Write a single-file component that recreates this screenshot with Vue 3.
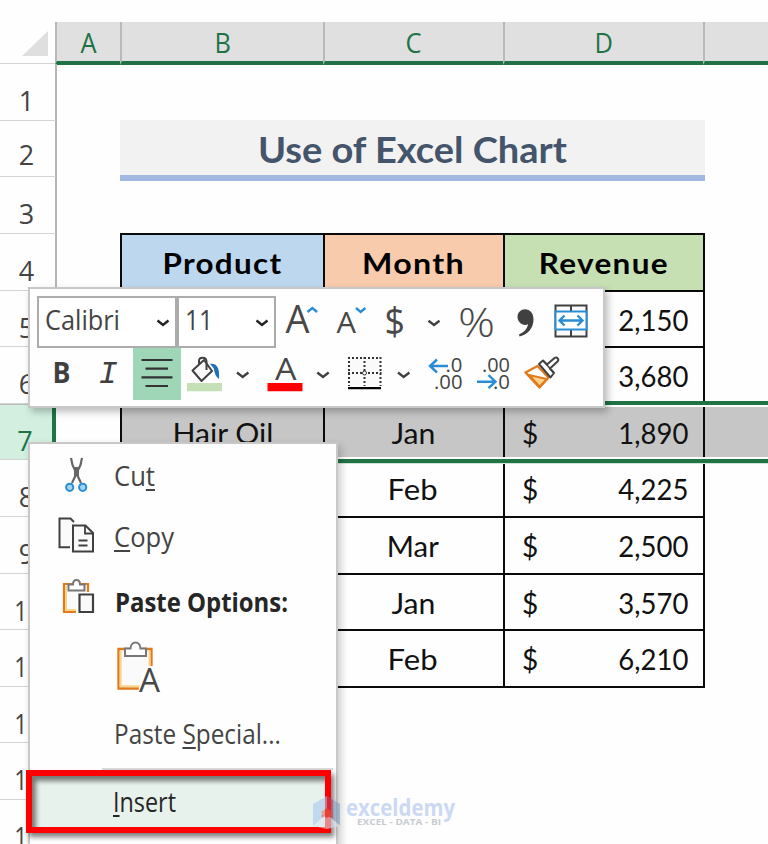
<script setup>
// Squeezes or stretches a label horizontally to the given width.
const vFit = {
  mounted(el, { value }) {
    const natural = el.getBoundingClientRect().width
    if (natural) el.style.transform = `scaleX(${value / natural})`
  }
}

const rows = [
  { n: 1 },
  { n: 2, title: true },
  { n: 3 },
  { n: 4, head: true },
  { n: 5, data: true, amount: '2,150' },
  { n: 6, data: true, amount: '3,680' },
  { n: 7, data: true, selected: true, product: 'Hair Oil', month: 'Jan', mw: 44, amount: '1,890' },
  { n: 8, data: true, month: 'Feb', mw: 50, amount: '4,225' },
  { n: 9, data: true, month: 'Mar', mw: 52, amount: '2,500' },
  { n: 10, data: true, month: 'Jan', mw: 44, amount: '3,570' },
  { n: 11, data: true, last: true, month: 'Feb', mw: 50, amount: '6,210' },
  { n: 12 },
  { n: 13 },
  { n: 14 }
]
</script>

<template>
  <div class="window">
    <div class="colheads">
      <div class="corner"><svg width="55" height="43" viewBox="0 0 55 43"><path d="M22 34L48 9V34Z" fill="#dfdfdf" /></svg></div>
      <div class="colhead a"><span class="cond">A</span></div>
      <div class="colhead b"><span class="cond">B</span></div>
      <div class="colhead c"><span class="cond">C</span></div>
      <div class="colhead d"><span class="cond">D</span></div>
      <div class="colhead e"></div>
    </div>

    <div v-for="r in rows" :key="r.n" class="row" :class="{ selected: r.selected, last: r.last }">
      <div class="rowhead" :class="{ raised: r.title }"><span :class="{ two: r.n > 9 }">{{ r.n }}</span></div>
      <div class="cell-a"></div>
      <div v-if="r.title" class="title"><span v-fit="309">Use of Excel Chart</span></div>
      <template v-if="r.head">
        <div class="cell b head blue"><span v-fit="120">Product</span></div>
        <div class="cell c head peach"><span v-fit="103">Month</span></div>
        <div class="cell d head green"><span v-fit="130">Revenue</span></div>
      </template>
      <template v-if="r.data">
        <div class="cell b"><span v-if="r.product" v-fit="101">{{ r.product }}</span></div>
        <div class="cell c"><span v-if="r.month" v-fit="r.mw">{{ r.month }}</span></div>
        <div class="cell d money"><span>$</span><span v-fit="70" class="right">{{ r.amount }}</span></div>
        <div class="cell-e"></div>
      </template>
    </div>

    <div class="toolbar">
      <div class="tools">
        <div class="box font"><span v-fit="75" class="left">Calibri</span><svg class="chev" width="14" height="8" viewBox="0 0 14 8"><path d="M1.5 1.5L7 6L12.5 1.5" /></svg></div>
        <div class="box size"><span v-fit="28" class="left">11</span><svg class="chev" width="14" height="8" viewBox="0 0 14 8"><path d="M1.5 1.5L7 6L12.5 1.5" /></svg></div>
        <svg width="51" height="52" viewBox="0 0 51 52"><text class="lt" x="9.5" y="37" font-size="39" textLength="24" lengthAdjust="spacingAndGlyphs">A</text><path class="bl" d="M31.5 16L36.3 12L41.1 16" /></svg>
        <svg width="48" height="52" viewBox="0 0 48 52"><text class="lt" x="9.5" y="37" font-size="29" textLength="19.5" lengthAdjust="spacingAndGlyphs">A</text><path class="bl" d="M29 12L33.7 16L38.4 12" /></svg>
        <svg width="40" height="52" viewBox="0 0 40 52"><text class="lt" x="9.5" y="38.5" font-size="38" textLength="20.5" lengthAdjust="spacingAndGlyphs">$</text></svg>
        <svg width="35" height="52" viewBox="0 0 35 52"><path class="dk" d="M13.500 24.700L19 29L24.500 24.700" /></svg>
        <svg width="55" height="52" viewBox="0 0 55 52"><text class="lt thin" x="8" y="40.500" font-size="41" textLength="37" lengthAdjust="spacingAndGlyphs">%</text></svg>
        <svg width="40" height="52" viewBox="0 0 40 52"><path d="M20 13.300C24.800 13.300 28.500 17 28.500 23.500C28.500 32 23 38.500 14.500 40.500L14 38.500C19 36.500 22.500 32.500 23 28.300C18 30.500 12.500 26.500 12.500 20.800C12.500 16.500 16 13.300 20 13.300Z" fill="#404040" /></svg>
        <svg width="56" height="52" viewBox="0 0 56 52">
          <path d="M10.500 9.500H41.500V40.500H10.500ZM26 9.500V40.500" fill="#fafafa" stroke="#404040" stroke-width="2" />
          <path d="M10.500 15.500H41.500V33.500H10.500Z" fill="#fff" stroke="#2a8dd4" stroke-width="2" />
          <path class="bl" d="M15 24.500H37M19.500 19.500L14.500 24.500L19.500 29.500M32.500 19.500L37.500 24.500L32.500 29.500" />
        </svg>
      </div>
      <div class="tools">
        <svg width="48" height="52" viewBox="0 0 48 52"><text x="15.500" y="34.700" font-size="29" class="bold" textLength="18" lengthAdjust="spacingAndGlyphs">B</text></svg>
        <svg width="48" height="52" viewBox="0 0 48 52"><text x="13.500" y="34.500" font-size="32" class="ital">I</text></svg>
        <svg width="48" height="52" viewBox="0 0 48 52" class="active"><path d="M8.500 12H39.500M12.500 20.700H35M8.500 29.300H39.500M12.500 38H35" stroke="#333" stroke-width="2.200" /></svg>
        <svg width="48" height="52" viewBox="0 0 48 52">
          <path d="M11.500 22.500L23 12L31 23L20.500 33Z" fill="#fafafa" stroke="#404040" stroke-width="2" stroke-linejoin="round" />
          <path d="M18 17V13C18 8.500 25 8.500 25.500 13V22" fill="none" stroke="#404040" stroke-width="2" />
          <path d="M29 16C35 15 39 19 38 31C34 28 34 25 32.500 20Z" fill="#1f70b8" />
          <path d="M6 35H41V43.300H6Z" fill="#c5e0b4" />
        </svg>
        <svg width="32" height="52" viewBox="0 0 32 52"><path class="dk" d="M8 24.500L13.700 29L19.400 24.500" /></svg>
        <svg width="48" height="52" viewBox="0 0 48 52"><text class="lt" x="14" y="32" font-size="31" textLength="21.500" lengthAdjust="spacingAndGlyphs">A</text><path d="M6.500 35H41.500V43.300H6.500Z" fill="#f00" /></svg>
        <svg width="32" height="52" viewBox="0 0 32 52"><path class="dk" d="M8.300 24.500L14 29L19.700 24.500" /></svg>
        <svg width="48" height="52" viewBox="0 0 48 52">
          <path d="M7 10H40V38H7Z" fill="#fafafa" />
          <path d="M7 10H40.500M7 25H40.500M8 9V38M23.500 9V38M39.500 9V38" fill="none" stroke="#333" stroke-width="2" stroke-dasharray="2 2" />
          <path d="M7 40.200H40" stroke="#000" stroke-width="2.200" />
          <circle cx="23.500" cy="25" r="2" fill="#fff" stroke="#333" />
        </svg>
        <svg width="32" height="52" viewBox="0 0 32 52"><path class="dk" d="M9 24.500L14.700 29L20.400 24.500" /></svg>
        <svg width="48" height="52" viewBox="0 0 48 52">
          <text class="num" x="24.500" y="23.700" textLength="17" lengthAdjust="spacingAndGlyphs">.0</text>
          <text class="num" x="13" y="41" textLength="28.500" lengthAdjust="spacingAndGlyphs">.00</text>
          <path class="bl" d="M27 18H9.500M16 11.500L9 18L16 24.500" />
        </svg>
        <svg width="48" height="52" viewBox="0 0 48 52">
          <text class="num" x="13" y="23.700" textLength="28" lengthAdjust="spacingAndGlyphs">.00</text>
          <text class="num" x="24" y="41" textLength="17" lengthAdjust="spacingAndGlyphs">.0</text>
          <path class="bl" d="M8 33.700H26M19.500 27.200L26.500 33.700L19.500 40.200" />
        </svg>
        <svg width="48" height="52" viewBox="0 0 48 52">
          <path d="M8.500 24.500L20.500 18L31.500 29.500L22.500 39.500Z" fill="#fff" stroke="#e07a1c" stroke-width="2.400" stroke-linejoin="round" />
          <path d="M12 27L30 31L22.500 38.500Z" fill="#fbd48a" stroke="#e07a1c" stroke-width="2" />
          <path d="M22 16L26 12.500L30 16.500L37.500 10C40 8.500 42.500 11.500 40.500 13.500L33 20.500L37 25L33.500 29.500Z" fill="#fff" stroke="#404040" stroke-width="2" stroke-linejoin="round" />
          <path d="M26 12.500L37 25" stroke="#404040" stroke-width="1.500" />
        </svg>
      </div>
    </div>

    <div class="menu">
      <div class="item cut">
        <svg width="83" height="62" viewBox="0 0 83 62">
          <path d="M40 13L41.500 20L50 38M51 13L49.500 20L41 38" fill="none" stroke="#666" stroke-width="2.200" />
          <path d="M43 22H48V31H43Z" fill="#666" />
          <circle cx="38.700" cy="42.300" r="3.600" class="ring" /><circle cx="51.700" cy="42.300" r="3.600" class="ring" />
        </svg>
        <span v-fit="41" class="left">Cu<u>t</u></span>
      </div>
      <div class="item copy">
        <svg width="83" height="62" viewBox="0 0 83 62">
          <path d="M39 40.200H28.500V11.500H39.500L43 15" fill="#fafafa" stroke="#404040" stroke-width="2" />
          <path d="M42 18.500H54.500L62 26V44.500H42Z" fill="#fafafa" stroke="#404040" stroke-width="2" />
          <path d="M54 18.500V26.500H62M47.500 33.500H56.500M47.500 38.500H56.500" fill="none" stroke="#404040" stroke-width="1.800" />
        </svg>
        <span v-fit="60" class="left"><u>C</u>opy</span>
      </div>
      <div class="item options">
        <svg width="83" height="68" viewBox="0 0 83 68">
          <path d="M33 15H57V43H33Z" fill="#fafafa" stroke="#e07a1c" stroke-width="2.200" />
          <path d="M35 17V41H46" fill="none" stroke="#fbd48a" stroke-width="2" />
          <path d="M45 23H66V46H45Z" fill="#fff" />
          <path d="M37.500 21.500V15.500H42C42 9.500 49 9.500 49 15.500H53.500V21.500Z" fill="#fff" stroke="#777" stroke-width="2" />
          <path d="M48.500 25.500H62V43H48.500Z" fill="#fafafa" stroke="#404040" stroke-width="2.200" />
        </svg>
        <span v-fit="173" class="left">Paste Options:</span>
      </div>
      <div class="item big">
        <svg width="60" height="60" viewBox="0 0 60 60">
          <path d="M3.500 12H36.500V51.500H3.500Z" fill="#fafafa" stroke="#e07a1c" stroke-width="2.300" />
          <path d="M5.700 14V49.300H29M34.500 14V30" fill="none" stroke="#fbd48a" stroke-width="2" />
          <path d="M23 55L27 38L32 29H42V55Z" fill="#fff" />
          <path d="M10 19V11.500H15.500C16 3.500 25 3.500 25.500 11.500H31V19Z" fill="#fff" stroke="#777" stroke-width="2" />
          <text class="lt" x="24" y="54.500" font-size="33" textLength="21" lengthAdjust="spacingAndGlyphs">A</text>
        </svg>
      </div>
      <div class="item special"><span v-fit="167" class="left">Paste <u>S</u>pecial...</span></div>
      <div class="rule"></div>
      <div class="insert"><span v-fit="63" class="left"><u>I</u>nsert</span></div>
    </div>

    <div class="watermark">
      <svg width="28" height="34" viewBox="0 0 28 34">
        <path d="M0 8L14 0L14 18L0 30Z" fill="#a9c8ee" />
        <path d="M14 0L27 8V30L14 18Z" fill="#7f9fc4" />
        <path d="M14 0L20 4V22L14 26L8 20L14 12Z" fill="#d52238" opacity=".75" />
        <path d="M0 30L14 18L27 30L14 33Z" fill="#dbe8ef" />
        <path d="M8 16L14 12L18 15V20L13 22Z" fill="#dd6c58" />
      </svg>
      <div class="brand">
        <span v-fit="109" class="name left">exceldemy</span>
        <span v-fit="84" class="tag left">EXCEL - DATA - BI</span>
      </div>
    </div>
  </div>
</template>

<style>
body { background: #fefefe; overflow: hidden; }
</style>

<style scoped>
* { box-sizing: border-box; }
svg { display: block; flex: none; }
.window { position: relative; width: 768px; height: 844px; overflow: hidden; background: #fefefe; font: 27px "Open Sans", sans-serif; color: #444; }
span { display: inline-block; white-space: nowrap; }
.left { transform-origin: left; }
.right { transform-origin: right; }

.colheads { display: flex; height: 64.2px; padding-top: 22px; }
.corner { width: 55px; border-bottom: 1px solid #d4d4d4; }
.colhead { height: 43px; line-height: 41px; text-align: center; color: #217346; background: #e0e0e0; border-left: 2px solid #b9b9b9; border-bottom: 4px solid #217346; }
.colhead.a { width: 65px; padding-left: 1px; }
.colhead.e { flex: 1; }
.cond { transform: scaleX(.94); }
.b { width: 203px; }
.c { width: 180px; }
.d { width: 200px; }

.row { display: flex; flex: none; height: 56.6px; }
.rowhead { width: 57px; padding: 16px 2px 0 0; line-height: 42px; text-align: center; border-right: 2px solid #b5b5b5; border-bottom: 1px solid #d4d4d4; }
.rowhead.raised { padding-top: 13px; }
.rowhead .two { transform: translateX(1px) scaleX(.85); }
.cell-a { width: 63px; }
.cell { height: 58.6px; margin-top: -1px; padding-top: 1px; border-top: 2px solid #0a0a0a; border-left: 2px solid #0a0a0a; font: 28px/55px Lato, sans-serif; color: #111; text-align: center; }
.cell.c { padding-right: 2px; }
.cell.d { width: 202px; border-right: 2px solid #0a0a0a; }
.last .cell { border-bottom: 2px solid #0a0a0a; }
.cell.head { font-weight: 700; font-size: 29px; line-height: 53px; letter-spacing: 1.2px; color: #000; }
.blue { background: #bdd7ee; }
.peach { background: #f8cbad; }
.green { background: #c6e0b4; }
.money { display: flex; justify-content: space-between; padding: 1px 15px 0 17px; }
.title { height: 61px; width: 585px; margin-top: -1px; padding-top: 2px; background: #f2f2f2; border-bottom: 6px solid #a3b8e0; font: 700 36px/54px Lato, sans-serif; color: #44546a; text-align: center; }

.selected { position: relative; height: 56.6px; }
.selected .rowhead { background: #d2efe0; color: #217346; border-right: 4px solid #217346; border-top: 1px solid #bbb; width: 56px; margin-right: 1px; padding-top: 15px; }
.selected .cell, .selected .cell-e { background: #c6c6c6; }
.selected .cell-e { flex: 1; height: 58px; margin-top: -1px; }
.selected::before, .selected::after { content: ""; position: absolute; left: 57px; right: 0; height: 4px; background: #217346; }
.selected::before { top: -3px; border-bottom: 2px solid #fff; }
.selected::after { top: 53px; border-top: 2px solid #fff; border-bottom: 1px solid #cfe3d7; }

.toolbar { position: absolute; left: 28px; top: 287px; width: 577px; height: 121px; padding: 7px; background: #fefefe; border: 2px solid #c8c8c8; box-shadow: 3px 4px 7px rgba(0, 0, 0, .25); }
.tools { display: flex; height: 52px; }
.box { display: flex; flex: none; align-items: center; justify-content: space-between; height: 52px; border: 2px solid #acacac; padding: 0 6px 2px; line-height: 44px; background: #fff; }
.box span { margin-bottom: 3px; }
.box.font { width: 140px; padding-right: 5px; }
.box.size { width: 99px; padding-right: 5px; }
.chev { fill: none; stroke: #222; stroke-width: 2.4; margin-top: 4px; }
.lt { font-family: "Open Sans", sans-serif; font-weight: 400; fill: #484848; }
.thin { font-weight: 300; }
.dk { fill: none; stroke: #404040; stroke-width: 2.4; }
.bl { fill: none; stroke: #2a8dd4; stroke-width: 2.4; }
.bold { font-weight: 700; fill: #404040; }
.ital { font-family: "Liberation Mono", monospace; font-style: italic; fill: #404040; }
.num { font-size: 20px; fill: #444; }
.active { background: #9fd6b8; }
.ring { fill: #a5d4f2; stroke: #2a8dd4; stroke-width: 2; }

.menu { position: absolute; left: 28px; top: 442px; width: 310px; height: 420px; padding-top: 1px; background: #fefefe; border: 2px solid #c8c8c8; box-shadow: 3px 4px 8px rgba(0, 0, 0, .2); color: #444; }
.item { display: flex; padding-left: 1px; }
.item u, .insert u { text-decoration-thickness: 2px; text-underline-offset: 3px; text-decoration-skip-ink: none; }
.cut, .copy { height: 62px; line-height: 61px; }
.copy { line-height: 60px; }
.options { height: 68px; line-height: 65px; font-weight: 700; color: #262626; }
.options span { margin-left: 1px; }
.big { height: 60px; padding-left: 85px; }
.special { height: 71px; line-height: 74px; padding-left: 84px; }
.rule { width: 231px; height: 2px; margin-left: 72px; background: #d9d9d9; }
.insert { position: relative; width: 305px; height: 63px; margin: 0 0 0 -4px; padding-left: 81px; line-height: 52px; border: 6px solid #f00; background: #e8f2ec; color: #262626; box-shadow: 3px 4px 5px rgba(0, 0, 0, .5), inset 4px 5px 5px rgba(0, 0, 0, .5); }

.watermark { position: absolute; left: 313px; top: 796px; display: flex; opacity: .9; }
.watermark svg { opacity: .65; }
.brand { display: flex; flex-direction: column; align-items: flex-start; padding-left: 5px; }
.name { font-weight: 700; font-size: 23px; line-height: 23px; color: #c6d7f1; }
.tag { margin: -2px 0 0 11px; font-weight: 700; font-size: 8.5px; line-height: 10px; color: #c3c7cd; }
</style>
